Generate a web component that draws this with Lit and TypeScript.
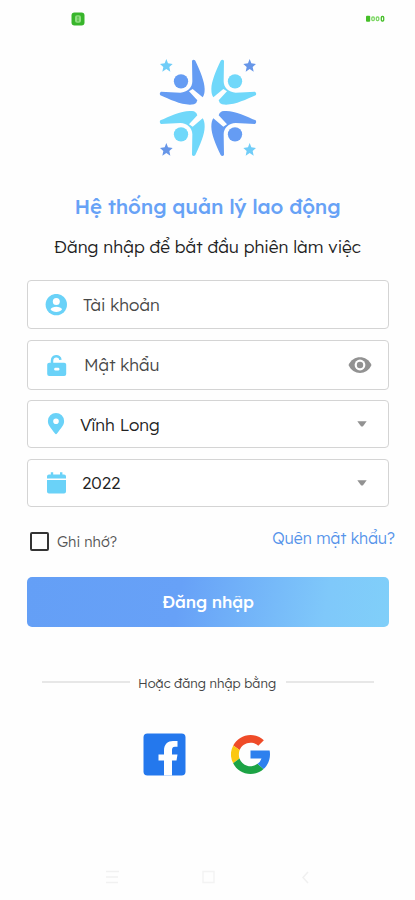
import { LitElement, html, svg, css } from "lit";
import { customElement } from "lit/decorators.js";

const STAR = "M0 -20 L5 -7 L19 -5 L9 4 L12 18 L0 10 L-12 18 L-9 4 L-19 -5 L-5 -7 Z";

const person = (color: string, transform: string) => svg`
  <g fill=${color} transform=${transform}>
    <circle cx="93" cy="94" r="21.5"/>
    <path d="M126 32 Q131 26 136 32 C150 62 164 94 164 117 Q164 134 158 142 L128 117 L117 124 L142 151 Q141 159 132 163 C100 169 62 149 31 136 Q27 129 33 125 L91 128 C112 127 127 113 127 94 Z"/>
  </g>`;

const icons = {
  user: html`<svg width="22" height="22" viewBox="0 0 22 22"><circle cx="11.3" cy="10.6" r="10.7" fill="#6ad2f8"/><circle cx="11.3" cy="7.6" r="3.5" fill="#fff"/><path d="M5.5 15.3C6.7 11.8 15.9 11.8 17.1 15.3C14.8 18.8 7.8 18.8 5.5 15.3Z" fill="#fff"/></svg>`,
  lock: html`<svg width="22" height="22" viewBox="0 0 22 22"><path d="M7 9.5V7C7 1.1 15 .9 15.4 5.8" fill="none" stroke="#6ad2f8" stroke-width="2.5"/><rect x="2.2" y="8.7" width="19" height="13.3" rx="2" fill="#6ad2f8"/><rect x="9.2" y="13.8" width="5.2" height="2.7" rx="1.2" fill="#fff"/></svg>`,
  pin: html`<svg width="22" height="22" viewBox="0 0 22 22"><path fill-rule="evenodd" d="M11 0A8.1 8.1 0 0 0 2.9 8.1C2.9 12.5 5.5 14.5 10 20.6Q11 21.8 12 20.6C16.5 14.5 19.1 12.5 19.1 8.1A8.1 8.1 0 0 0 11 0ZM11 5.4A2.8 2.8 0 1 1 11 11A2.8 2.8 0 0 1 11 5.4Z" fill="#6ad2f8"/></svg>`,
  calendar: html`<svg width="22" height="22" viewBox="0 0 22 22"><path d="M2 6.5V4.5Q2 2.5 4 2.5H5.8V.2H8.2V2.5H15V.2H17.4V2.5H19Q21 2.5 21 4.5V6.5ZM2 8H21V19.5Q21 21.5 19 21.5H4Q2 21.5 2 19.5Z" fill="#6ad2f8"/></svg>`,
  eye: html`<svg width="24" height="18" viewBox="0 0 24 18"><path d="M.5 9C5 -1.5 19 -1.5 23.5 9C19 19.5 5 19.5 .5 9Z" fill="#929292"/><circle cx="12" cy="9" r="5.4" fill="#fff"/><circle cx="12" cy="9" r="3.2" fill="#929292"/></svg>`,
  caret: html`<svg width="10" height="6" viewBox="0 0 10 6"><path d="M.3 .3H9.7L6 5.2Q5 6 4 5.2Z" fill="#929292"/></svg>`,
};

@customElement("app-root")
export class AppRoot extends LitElement {
  static styles = css`
    :host { display: block; width: 415px; height: 900px; background: #fefefe; overflow: hidden; font-family: Lexend, Inter, "Noto Sans", sans-serif; font-weight: 300; color: #222; }
    * { box-sizing: border-box; }
    svg { display: block; flex: none; }
    .page { display: flex; flex-direction: column; height: 900px; }
    .status { height: 50px; padding: 12px 30px 0 71px; display: flex; justify-content: space-between; }
    .battery { margin-top: 3px; }
    .logo { margin-left: 150px; }
    h1, p { margin: 0; text-align: center; white-space: nowrap; }
    h1 { margin-top: 26px; height: 30px; line-height: 30px; font-size: 20.5px; font-weight: 500; letter-spacing: -0.12px; color: #67a2f6; }
    .sub { height: 26px; line-height: 26px; margin-top: 13px; font-size: 17.3px; }
    .form { padding: 20px 26px 0 27px; display: grid; grid-template-rows: 49px 50px 48px 48px; row-gap: 10.6px; }
    .field { display: flex; align-items: center; border: 1.5px solid #d4d4d4; border-radius: 4px; padding: 0 16px 0 17px; background: #fff; font-size: 17px; color: #484848; }
    .field.dark { color: #222; padding-right: 21px; }
    .label { flex: 1; white-space: nowrap; }
    .options { height: 70px; padding: 0 20px 0 30px; display: flex; justify-content: space-between; }
    .remember { display: flex; align-items: center; height: 20px; margin-top: 25px; font-size: 14.5px; color: #555; }
    .box { width: 19px; height: 19px; border: 2px solid #333; border-radius: 2px; margin-right: 8px; }
    .forgot { height: 20px; line-height: 20px; margin-top: 21px; font-size: 15.8px; color: #5593ea; white-space: nowrap; }
    .submit { margin: 0 26px 0 27px; height: 50px; border: 0; border-radius: 5px; color: #fff; font: 500 17px/50px Lexend, Inter, "Noto Sans", sans-serif; letter-spacing: -0.15px; padding: 0; background: linear-gradient(100deg, #649ff6 0%, #67a1f7 42%, #7fc8fa 82%, #80cff9 100%); }
    .divider { display: flex; align-items: center; margin: 46px 41px 0 42px; height: 20px; font-size: 13px; color: #444; white-space: nowrap; }
    .line { width: 88px; height: 1.5px; background: #e7e7e7; margin-bottom: 2px; }
    .words { width: 156px; padding-right: 2px; text-align: center; }
    .social { display: flex; margin: 40.5px 0 0 143px; gap: 45px; align-items: center; }
    .nav { margin: 93.5px 105px 0 106px; display: flex; justify-content: space-between; }
  `;

  field(icon: unknown, label: string, gap: number, end: unknown = "", dark = false) {
    return html`<div class="field ${dark ? "dark" : ""}">${icon}<span class="label" style="margin-left:${gap}px">${label}</span>${end}</div>`;
  }

  render() {
    return html`<div class="page">
      <div class="status">
        <svg width="14" height="14" viewBox="0 0 14 14"><rect x=".5" y=".5" width="13" height="13" rx="3" fill="#38b52b"/><rect x="4" y="3.3" width="6" height="7.4" rx="2" fill="#8ede80"/><path d="M6 5.2H8M6 7H8M6 8.8H8" stroke="#4dbb3e"/></svg>
        <svg class="battery" width="19" height="7" viewBox="0 0 19 7"><rect y=".8" width="4.2" height="6" rx="1" fill="#45bf28"/><g fill="none" stroke="#7ed866" stroke-width="1.3"><rect x="5.8" y="2" width="2.5" height="3.6" rx="1"/><rect x="10.3" y="2" width="2.5" height="3.6" rx="1"/><rect x="15.3" y="1.5" width="2.4" height="4.5" rx="1" stroke="#45bf28"/></g></svg>
      </div>
      <svg class="logo" width="120" height="115" viewBox="0 0 360 345">
        ${person("#659cf3", "")}
        ${person("#70d8fa", "translate(348 0) scale(-1 1)")}
        ${person("#70d8fa", "translate(0 347) scale(1 -1)")}
        ${person("#659cf3", "translate(348 347) scale(-1 -1)")}
        <path d=${STAR} transform="translate(49 47)" fill="#70cdf8"/>
        <path d=${STAR} transform="translate(299 47)" fill="#6796e8"/>
        <path d=${STAR} transform="translate(49 299)" fill="#6796e8"/>
        <path d=${STAR} transform="translate(299 299)" fill="#70cdf8"/>
      </svg>
      <h1>Hệ thống quản lý lao động</h1>
      <p class="sub">Đăng nhập để bắt đầu phiên làm việc</p>
      <div class="form">
        ${this.field(icons.user, "Tài khoản", 16)}
        ${this.field(icons.lock, "Mật khẩu", 17, icons.eye)}
        ${this.field(icons.pin, "Vĩnh Long", 13, icons.caret, true)}
        ${this.field(icons.calendar, "2022", 15, icons.caret, true)}
      </div>
      <div class="options">
        <div class="remember"><span class="box"></span><span>Ghi nhớ?</span></div>
        <div class="forgot">Quên mật khẩu?</div>
      </div>
      <button class="submit">Đăng nhập</button>
      <div class="divider"><span class="line"></span><span class="words">Hoặc đăng nhập bằng</span><span class="line"></span></div>
      <div class="social">
        <svg width="43" height="43" viewBox="0 0 43 43"><rect x=".5" y=".5" width="42" height="42" rx="4" fill="#2478ed"/><path d="M21 42.5V27.5H15.5V21.5H21V17.5C21 11 25 8 30 8H34.5V13.8H32C29.5 13.8 29 15.3 29 17.5V21.5H34.5L33.5 27.5H29V42.5Z" fill="#fff"/></svg>
        <svg width="39" height="39" viewBox="4 4 40 40"><path fill="#ef4b28" d="M6.3 14.7l6.6 4.8C14.7 15.1 19 12 24 12c3.1 0 5.9 1.2 8 3l5.7-5.7C34 6.1 29.3 4 24 4 16.3 4 9.7 8.3 6.3 14.7z"/><path fill="#fbc811" d="M6.3 14.7A20 20 0 0 0 6.2 33l6.6-5A12 12 0 0 1 12.9 19.5Z"/><path fill="#1ca345" d="M24 44c5.2 0 9.9-2 13.4-5.2l-6.2-5.2A12 12 0 0 1 12.7 28l-6.5 5C9.5 39.6 16.2 44 24 44z"/><path fill="#2d80ee" d="M43.6 20H24v8h11.3a12 12 0 0 1-4.1 5.6l6.2 5.2C37 39.2 44 34 44 24c0-1.3-.1-2.7-.4-4z"/></svg>
      </div>
      <div class="nav">
        <svg width="16" height="15" viewBox="0 0 16 15"><path d="M0 1.5H13M0 7H12M0 12.5H12" stroke="#f1f1f1" stroke-width="1.5"/></svg>
        <svg width="20" height="15" viewBox="0 0 20 15"><rect x="1" y="1.5" width="11" height="11" fill="none" stroke="#f3f3f3" stroke-width="1.5"/></svg>
        <svg width="9" height="15" viewBox="0 0 9 15"><path d="M7 2L2 7.5L7 13" fill="none" stroke="#f0f0f0" stroke-width="1.5"/></svg>
      </div>
    </div>`;
  }
}
